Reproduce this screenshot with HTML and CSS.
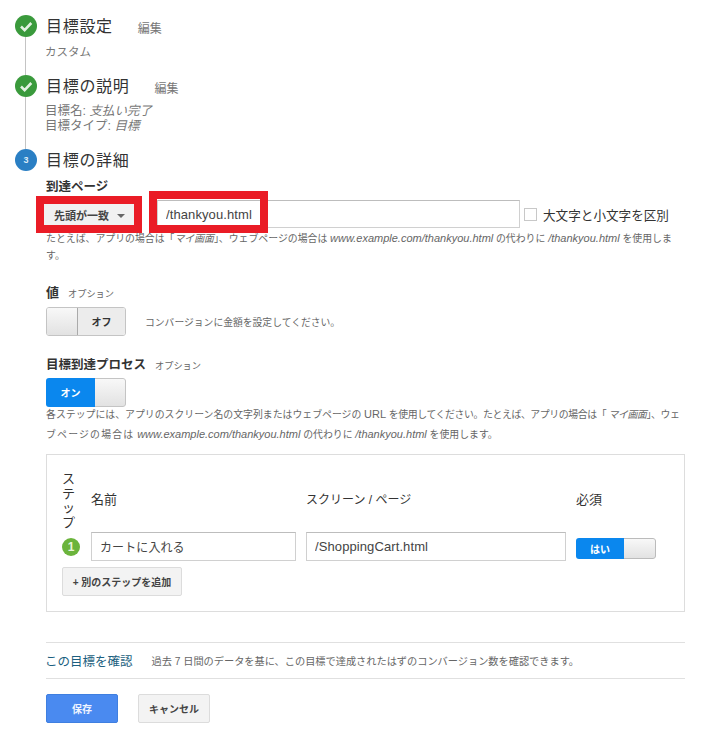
FILE: index.html
```html
<!DOCTYPE html>
<html lang="ja">
<head>
<meta charset="utf-8">
<title>目標の詳細</title>
<link rel="stylesheet" href="styles.css">
</head>
<body>
<main class="page">
  <section class="step step-one">
    <header class="step-head">
      <span class="badge done"><svg viewBox="0 0 22 22" width="22" height="22"><path d="M6 11.5l3.6 3.6L16.3 8" fill="none" stroke="#e4f2e2" stroke-width="2.6"/></svg></span>
      <h2 class="step-title">目標設定</h2>
      <a class="edit edit-one">編集</a>
    </header>
    <p class="summary summary-one">カスタム</p>
  </section>

  <section class="step step-two">
    <header class="step-head">
      <span class="badge done"><svg viewBox="0 0 22 22" width="22" height="22"><path d="M6 11.5l3.6 3.6L16.3 8" fill="none" stroke="#e4f2e2" stroke-width="2.6"/></svg></span>
      <h2 class="step-title">目標の説明</h2>
      <a class="edit edit-two">編集</a>
    </header>
    <p class="summary summary-two">目標名: <i>支払い完了</i><br>目標タイプ: <i>目標</i></p>
  </section>

  <section class="step step-three">
    <header class="step-head">
      <span class="badge current">3</span>
      <h2 class="step-title">目標の詳細</h2>
    </header>
    <div class="details">
      <div class="label label-dest">到達ページ</div>
      <div class="dest-row">
        <button class="match-btn">先頭が一致<span class="caret"></span></button>
        <div class="url-field">
          <input class="text-input url-input" value="/thankyou.html">
          <span class="red-frame"></span>
        </div>
        <span class="check"></span>
        <span class="check-label">大文字と小文字を区別</span>
      </div>
      <p class="help help-dest">たとえば、アプリの場合は「<i>マイ画面</i>」、ウェブページの場合は <i class="url">www.example.com/thankyou.html</i> の代わりに <i class="url">/thankyou.html</i> を使用します。</p>

      <div class="label label-value">値<small>オプション</small></div>
      <div class="value-row">
        <div class="toggle off"><span class="thumb"></span><span class="state">オフ</span></div>
        <span class="note">コンバージョンに金額を設定してください。</span>
      </div>

      <div class="label label-funnel">目標到達プロセス<small>オプション</small></div>
      <div class="toggle on"><span class="state">オン</span><span class="thumb"></span></div>
      <p class="help help-funnel">各ステップには、アプリのスクリーン名の文字列またはウェブページの <span class="url">URL</span> <span class="tight">を使用してください。たとえば、アプリの場合は「 <i>マイ画面</i>」、ウェ</span><span class="loose">ブページの場合は</span> <i class="url">www.example.com/thankyou.html</i> の代わりに <i class="url">/thankyou.html</i> を使用します。</p>

      <div class="funnel-box">
        <div class="funnel-grid">
          <div class="col-head col-step">ステップ</div>
          <div class="col-head col-name">名前</div>
          <div class="col-head col-page">スクリーン / ページ</div>
          <div class="col-head col-req">必須</div>
          <span class="step-num">1</span>
          <input class="text-input name-input" value="カートに入れる">
          <input class="text-input page-input" value="/ShoppingCart.html">
          <div class="toggle small"><span class="state">はい</span><span class="thumb"></span></div>
        </div>
        <button class="btn add-btn">+ 別のステップを追加</button>
      </div>

      <div class="verify">
        <a class="verify-link">この目標を確認</a>
        <span class="verify-note">過去 7 日間のデータを基に、この目標で達成されたはずのコンバージョン数を確認できます。</span>
      </div>

      <div class="actions">
        <button class="btn primary">保存</button>
        <button class="btn cancel">キャンセル</button>
      </div>
    </div>
  </section>
</main>
</body>
</html>
```

FILE: styles.css
```css
* { box-sizing: border-box; }
html, body { margin: 0; padding: 0; background: #fff; }
body {
  font-family: "Liberation Sans", "Noto Sans CJK JP", sans-serif;
  color: #333;
  font-size: 12px;
  overflow: hidden;
}
p, h2 { margin: 0; }
i { font-style: italic; }
.page { padding: 15px 32px 0 15px; height: 733px; }

.step { position: relative; }
.step-one::before, .step-two::before {
  content: "";
  position: absolute;
  left: 10px;
  top: 22px;
  width: 1px;
  background: #c4c4c4;
}
.step-one::before { height: 38px; }
.step-two::before { height: 52px; }
.step-one { margin-bottom: 14px; }
.step-two { margin-bottom: 15px; }

.step-head { display: flex; align-items: center; height: 22px; }
.badge {
  width: 22px;
  height: 22px;
  border-radius: 50%;
  flex: none;
  display: flex;
  align-items: center;
  justify-content: center;
}
.badge.done { background: #3a9a3c; }
.badge.current {
  background: #2a7fc4;
  color: #dcecf7;
  font-size: 9px;
  font-weight: bold;
}
.step-title {
  margin-left: 9px;
  padding-top: 1px;
  font-size: 16px;
  font-weight: 400;
  letter-spacing: 0.7px;
  color: #333;
  line-height: 22px;
}
.edit { font-size: 12px; color: #777; padding-top: 2px; }
.edit-one { margin-left: 25px; }
.edit-two { margin-left: 25px; }

.summary { margin-left: 30px; color: #777; }
.summary-one { margin-top: 6px; font-size: 11.5px; line-height: 18px; }
.summary-two { margin-top: 7px; font-size: 12.5px; line-height: 15px; }
.summary i { color: #777; }

.details { margin-left: 31px; margin-top: 7px; }
.label {
  height: 18px;
  font-size: 12.5px;
  font-weight: 700;
  line-height: 18px;
  color: #333;
}
.label small {
  margin-left: 9px;
  font-size: 9.2px;
  font-weight: 400;
  color: #666;
}
.label-value { font-size: 13px; }

.dest-row { display: flex; align-items: center; height: 28px; margin-top: 4px; }
.match-btn {
  width: 90px;
  height: 21px;
  margin-left: -2px;
  margin-top: 1px;
  padding: 0 0 0 10px;
  border: 0;
  outline: 8px solid #ea1c26;
  background: #f1f1f1;
  font-family: inherit;
  font-size: 11px;
  font-weight: 700;
  color: #444;
  text-align: left;
  display: flex;
  align-items: center;
}
.caret {
  margin-left: 8px;
  margin-top: 2px;
  border-top: 4px solid #666;
  border-left: 4px solid transparent;
  border-right: 4px solid transparent;
}
.url-field { position: relative; margin-left: 23px; }
.text-input {
  display: block;
  height: 29px;
  padding: 0 8px;
  border: 1px solid #d0d0d0;
  border-top-color: #bdbdbd;
  background: #fff;
  font-family: inherit;
  font-size: 13px;
  letter-spacing: 0.1px;
  color: #444;
  border-radius: 0;
  outline: 0;
}
.url-input { width: 363px; height: 28px; }
.red-frame {
  position: absolute;
  left: -8px;
  top: -9px;
  width: 119px;
  height: 42px;
  border: 8px solid #ea1c26;
}
.check {
  width: 13px;
  height: 13px;
  margin-left: 4px;
  border: 1px solid #c8c8c8;
  background: #fff;
}
.check-label { margin-left: 6px; font-size: 12.6px; color: #333; }

.help { font-size: 9.9px; color: #666; }
.help i { color: #666; line-height: 0; }
.help span { line-height: 0; }
.help .url { font-size: 11px; }
.help .tight { letter-spacing: -0.4px; }
.help .loose { letter-spacing: 1.2px; }
.help-dest { margin-top: 2px; line-height: 17px; width: 640px; }
.label-value { margin-top: 20px; }
.value-row { display: flex; align-items: center; margin-top: 5px; }
.note { margin-left: 19px; font-size: 9.8px; color: #666; }
.label-funnel { margin-top: 20px; }
.label-funnel + .toggle { margin-top: 4px; }

.toggle {
  display: flex;
  width: 80px;
  height: 29px;
  border-radius: 3px;
  overflow: hidden;
  border: 1px solid #c4c4c4;
  font-size: 10px;
  font-weight: 700;
}
.thumb {
  display: block;
  background: linear-gradient(#f8f8f8, #e2e2e2);
  flex: none;
}
.state { display: flex; align-items: center; justify-content: center; flex: 1; }
.toggle.off .thumb { width: 31px; border-right: 1px solid #aaa; }
.toggle.off .state { background: #ececec; color: #333; }
.toggle.on { border: 0; }
.toggle.on .state { background: #0a87ee; color: #fff; }
.toggle.on .thumb { width: 31px; border: 1px solid #c4c4c4; border-left: 0; border-radius: 0 3px 3px 0; }
.toggle.small { width: 80px; height: 21px; border: 0; align-self: center; margin-top: 3px; }
.toggle.small .state { background: #0a87ee; color: #fff; }
.toggle.small .thumb { width: 32px; border: 1px solid #bbb; border-left: 0; border-radius: 0 3px 3px 0; }

.help-funnel { margin-top: -2px; line-height: 20px; width: 640px; }

.funnel-box {
  margin-top: 9px;
  width: 639px;
  height: 158px;
  padding: 17px 15px 0;
  border: 1px solid #ddd;
}
.funnel-grid {
  display: grid;
  grid-template-columns: 29px 215px 270px 80px;
  row-gap: 2px;
  align-items: center;
}
.col-head { font-size: 13px; color: #333; }
.col-step { width: 14px; line-height: 14.5px; }
.col-name, .col-page, .col-req { margin-bottom: 6px; }
.col-page { font-size: 12px; }
.step-num {
  width: 18px;
  height: 18px;
  border-radius: 50%;
  background: #6bb43c;
  color: #e8f4dd;
  font-size: 12px;
  font-weight: 700;
  display: flex;
  align-items: center;
  justify-content: center;
}
.name-input { width: 205px; font-size: 12px; }
.page-input { width: 260px; }

.btn {
  display: block;
  height: 29px;
  border-radius: 2px;
  border: 1px solid #dcdcdc;
  background: #f3f3f3;
  font-family: inherit;
  font-size: 10px;
  font-weight: 700;
  color: #444;
  padding: 0;
}
.add-btn { width: 120px; margin-top: 6px; }

.verify {
  margin-top: 30px;
  width: 639px;
  height: 37px;
  display: flex;
  align-items: center;
  border-top: 1px solid #e0e0e0;
  border-bottom: 1px solid #e0e0e0;
}
.verify-link { margin-left: -1px; font-size: 12.5px; color: #1c5f80; }
.verify-note { margin-left: 19px; font-size: 10.2px; color: #666; }

.actions { display: flex; gap: 20px; margin-top: 15px; }
.actions .btn { width: 72px; }
.btn.primary { background: #4a8af0; border-color: #3f7fe0; color: #eef4ff; }
```
